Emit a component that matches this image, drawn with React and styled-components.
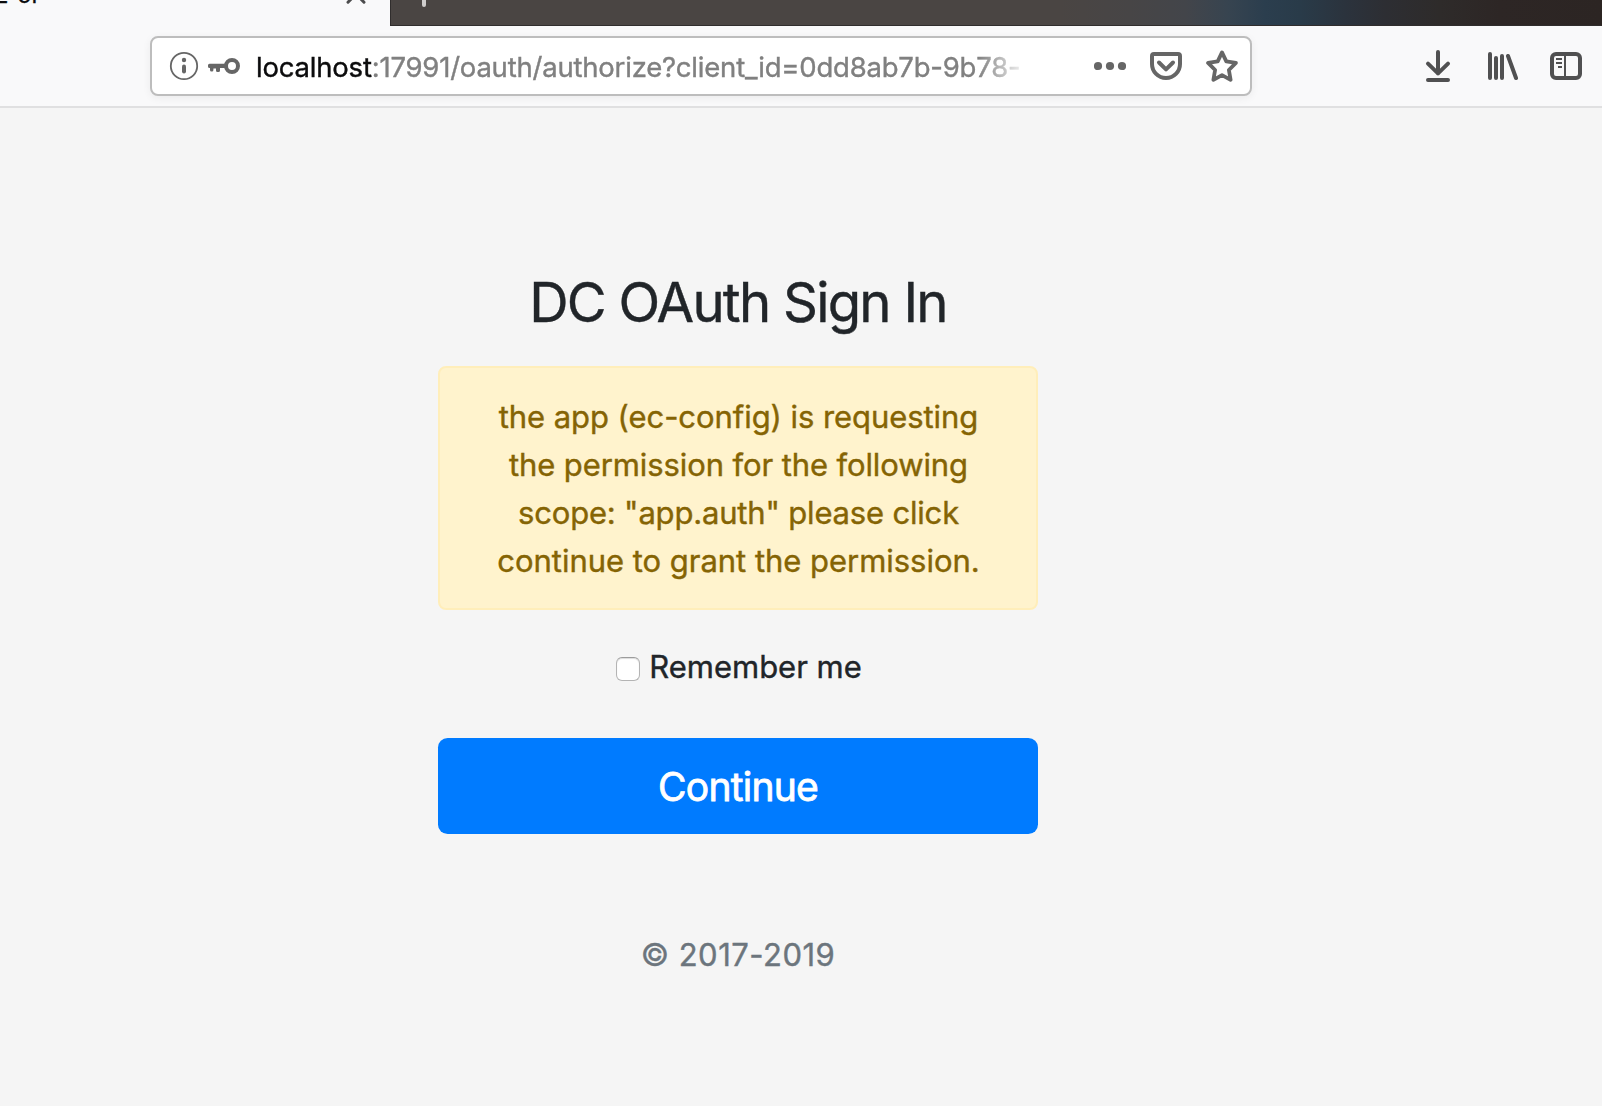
import React from "react";
import styled, { createGlobalStyle } from "styled-components";

const GlobalStyle = createGlobalStyle`
  * { box-sizing: border-box; }
  body {
    margin: 0;
    background: #f5f5f5;
    font-family: Inter, "Liberation Sans", sans-serif;
    color: #212529;
  }
`;

const Window = styled.div`
  display: flex;
  flex-direction: column;
  height: 1106px;
  overflow: hidden;
`;

const TabStrip = styled.div`
  display: flex;
  height: 26px;
  overflow: hidden;
  background: linear-gradient(
    to right,
    #4a4543 0, #4a4543 1060px, #474546 1130px, #43454a 1185px, #374450 1228px,
    #2b3e4e 1265px, #293b49 1300px, #2b333d 1345px, #2d2e33 1385px,
    #2e2b2a 1440px, #2d2625 1500px, #2c2523 1602px
  );
`;

const ActiveTab = styled.div`
  display: flex;
  justify-content: space-between;
  align-items: flex-start;
  width: 390px;
  padding-right: 23px;
  background: #f9f9fa;
`;

const TabTitle = styled.span`
  margin: -20px 0 0 -6px;
  font-size: 24px;
  line-height: 30px;
  word-spacing: 2px;
  color: #0c0c0d;
  -webkit-text-stroke: 0.3px;
`;

const StripRest = styled.div`
  flex: 1;
  padding-left: 22px;
  border-left: 1px solid #302d2d;
  border-bottom: 1px solid #302d2d;
`;

const Toolbar = styled.div`
  display: flex;
  align-items: flex-start;
  height: 82px;
  padding: 10px 20px 0 150px;
  background: #f9f9fa;
  border-bottom: 2px solid #e0e0e1;
`;

const UrlBar = styled.div`
  display: flex;
  align-items: center;
  width: 1102px;
  height: 60px;
  padding: 0 12px 0 16px;
  background: #fff;
  border: 2px solid #bdbdbd;
  border-radius: 8px;
  box-shadow: 0 2px 8px rgba(0, 0, 0, 0.06);
`;

const Glyph = styled.svg`
  display: block;
  flex: none;
  width: ${(p) => p.$w || 32}px;
  height: ${(p) => p.$h || 32}px;
  margin-left: ${(p) => p.$gap || 0}px;
  color: ${(p) => p.$tone || "#666"};
  fill: none;
  stroke: currentColor;
  stroke-width: 4;
  stroke-linecap: round;
  stroke-linejoin: round;
`;

const Address = styled.div`
  flex: 1;
  margin-left: 15px;
  overflow: hidden;
  white-space: nowrap;
  font-size: 27.5px;
  line-height: 36px;
  letter-spacing: -0.21px;
  padding-top: 2px;
  color: #808080;
  -webkit-text-stroke: 0.4px;
  mask-image: linear-gradient(to right, #000 722px, transparent 772px);
`;

const Host = styled.span`
  color: #0c0c0d;
  letter-spacing: -0.2px;
`;

const Actions = styled.div`
  display: flex;
  margin: 14px 0 0 auto;
`;

const Page = styled.main`
  display: flex;
  flex-direction: column;
  align-items: center;
  width: 1476px;
  padding-top: 160px;
`;

const Form = styled.form`
  display: flex;
  flex-direction: column;
  width: 600px;
  margin: 0;
  font-size: 31px;
  line-height: 48px;
  text-align: center;
  -webkit-text-stroke: 0.4px;
`;

const Title = styled.h1`
  margin: 0 0 30px;
  font-size: 54.5px;
  font-weight: 400;
  line-height: 68px;
  letter-spacing: -1.75px;
`;

const Alert = styled.div`
  padding: 25px 0 23px 1px;
  background: #fff3cd;
  border: 2px solid #ffeeba;
  border-radius: 8px;
  color: #856404;
`;

const Line = styled.div`
  letter-spacing: ${(p) => p.$track || 0}px;
`;

const Remember = styled.label`
  display: flex;
  justify-content: center;
  align-items: center;
  gap: 9px;
  margin: 33px 0 47px;
  padding-left: 2px;
`;

const Checkbox = styled.input`
  appearance: none;
  width: 24px;
  height: 24px;
  margin: 4px 0 0;
  background: #fff;
  border: 1px solid #b4b4b4;
  border-top-color: #9c9c9c;
  border-radius: 6px;
  box-shadow: inset 0 1px 1px rgba(0, 0, 0, 0.14);
`;

const Submit = styled.button`
  height: 96px;
  padding: 2px 0 0;
  border: 0;
  border-radius: 9.6px;
  background: #007bff;
  color: #fff;
  font-family: inherit;
  font-size: 39px;
  line-height: 60px;
  letter-spacing: -0.75px;
  -webkit-text-stroke: 0.8px;
`;

const Copyright = styled.p`
  margin: 97px 0 0;
  color: #6c757d;
  letter-spacing: 0.5px;
`;

const message = [
  ["the app (ec-config) is requesting", -0.06],
  ["the permission for the following", -0.1],
  ['scope: "app.auth" please click', -0.18],
  ["continue to grant the permission.", -0.03],
];

export default function App() {
  return (
    <Window>
      <GlobalStyle />
      <TabStrip>
        <ActiveTab>
          <TabTitle>E or</TabTitle>
          <Glyph $w={22} $h={6} $tone="#4c4c4d" viewBox="345 0 22 6">
            <path strokeWidth="3" d="M348 2.2L356 -6L364 2.2" />
          </Glyph>
        </ActiveTab>
        <StripRest>
          <Glyph $w={22} $h={8} $tone="#cfcdcd" viewBox="413 0 22 8">
            <path d="M424 -8V5" />
          </Glyph>
        </StripRest>
      </TabStrip>
      <Toolbar>
        <UrlBar>
          <Glyph viewBox="168 50 32 32">
            <circle cx="184" cy="66" r="13.2" strokeWidth="1.8" />
            <circle cx="184" cy="60" r="2.2" fill="currentColor" stroke="none" />
            <path d="M184 66.4V71.6" />
          </Glyph>
          <Glyph $gap={7} $w={34} viewBox="207 50 34 32">
            <circle cx="232" cy="66" r="6" />
            <path
              d="M209.5 63.7H225V68H220V70.5Q220 72 218.5 72H217.5Q216 72 216 70.5V68.6H213.4V70Q213.4 71.5 211.9 71.5H211.5Q210 71.5 210 70V68H209.5Q208 68 208 66.5V65.2Q208 63.7 209.5 63.7Z"
              fill="currentColor"
              stroke="none"
            />
          </Glyph>
          <Address>
            <Host>localhost</Host>:17991/oauth/authorize?client_id=0dd8ab7b-9b78-
          </Address>
          <Glyph viewBox="1094 50 32 32">
            <g fill="currentColor" stroke="none">
              <circle cx="1098" cy="66" r="4.1" />
              <circle cx="1110" cy="66" r="4.1" />
              <circle cx="1122" cy="66" r="4.1" />
            </g>
          </Glyph>
          <Glyph $gap={24} viewBox="1150 50 32 32">
            <path d="M1154 53.9H1178Q1180 53.9 1180 55.9V64A14 14 0 0 1 1152 64V55.9Q1152 53.9 1154 53.9Z" />
            <path d="M1159 62.5L1166 69.4L1173 62.5" />
          </Glyph>
          <Glyph $gap={24} viewBox="1206 50 32 32">
            <path
              strokeWidth="3.8"
              d="M1222 52.4L1226.3 61.4L1235.9 62.9L1228.9 70L1230.6 79.8L1222 75.1L1213.4 79.8L1215.1 70L1208.1 62.9L1217.7 61.4Z"
            />
          </Glyph>
        </UrlBar>
        <Actions>
          <Glyph $tone="#505051" viewBox="1422 50 32 32">
            <path d="M1438 52V73.4M1428 63.6L1438 73.4L1448 63.6M1428 80H1448" />
          </Glyph>
          <Glyph $gap={32} $tone="#505051" viewBox="1486 50 32 32">
            <path d="M1490 54V78M1496 58V78M1502 56V78M1508 56L1516 78" />
          </Glyph>
          <Glyph $gap={32} $tone="#505051" viewBox="1550 50 32 32">
            <rect x="1552" y="54" width="28" height="24" rx="4" />
            <path strokeWidth="2" strokeLinecap="butt" d="M1565 54V78M1556 59H1562M1556 63H1562M1558 67H1562" />
          </Glyph>
        </Actions>
      </Toolbar>
      <Page>
        <Form onSubmit={(e) => e.preventDefault()}>
          <Title>DC OAuth Sign In</Title>
          <Alert>
            {message.map(([text, track]) => (
              <Line key={text} $track={track}>{text}</Line>
            ))}
          </Alert>
          <Remember>
            <Checkbox type="checkbox" />
            Remember me
          </Remember>
          <Submit>Continue</Submit>
          <Copyright>© 2017-2019</Copyright>
        </Form>
      </Page>
    </Window>
  );
}
